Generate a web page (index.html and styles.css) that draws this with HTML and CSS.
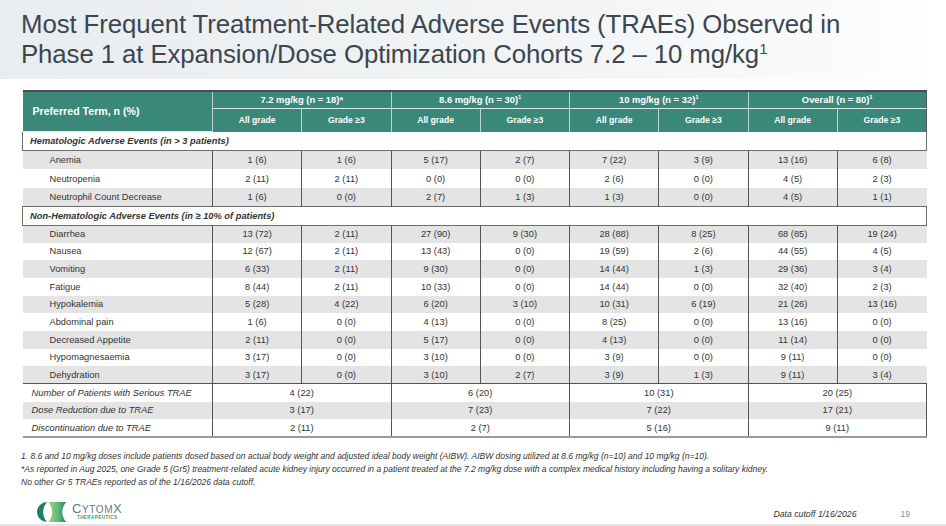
FILE: index.html
```html
<!DOCTYPE html>
<html lang="en">
<head>
<meta charset="utf-8">
<title>TRAEs</title>
<link rel="stylesheet" href="styles.css">
</head>
<body>
<div class="slide">
  <header class="title-band">
    <h1 class="title">Most Frequent Treatment-Related Adverse Events (TRAEs) Observed in<br>Phase 1 at Expansion/Dose Optimization Cohorts 7.2 – 10 mg/kg<sup>1</sup></h1>
  </header>

  <section class="table-wrap">
    <table class="ae">
      <colgroup>
        <col class="c-term">
        <col class="c-num"><col class="c-num"><col class="c-num"><col class="c-num">
        <col class="c-num"><col class="c-num"><col class="c-num"><col class="c-num">
      </colgroup>
      <thead>
        <tr class="h1">
          <th rowspan="2" class="h-term">Preferred Term, n (%)</th>
          <th colspan="2">7.2 mg/kg (n = 18)*</th>
          <th colspan="2">8.6 mg/kg (n = 30)<sup>1</sup></th>
          <th colspan="2">10 mg/kg (n = 32)<sup>1</sup></th>
          <th colspan="2" class="last">Overall (n = 80)<sup>1</sup></th>
        </tr>
        <tr class="h2">
          <th>All grade</th><th>Grade ≥3</th>
          <th>All grade</th><th>Grade ≥3</th>
          <th>All grade</th><th>Grade ≥3</th>
          <th>All grade</th><th class="last">Grade ≥3</th>
        </tr>
      </thead>
      <tbody>
        <tr class="sec"><td colspan="9">Hematologic Adverse Events (in &gt; 3 patients)</td></tr>
        <tr class="row g r-a"><td class="term">Anemia</td><td>1 (6)</td><td>1 (6)</td><td>5 (17)</td><td>2 (7)</td><td>7 (22)</td><td>3 (9)</td><td>13 (16)</td><td>6 (8)</td></tr>
        <tr class="row r-a"><td class="term">Neutropenia</td><td>2 (11)</td><td>2 (11)</td><td>0 (0)</td><td>0 (0)</td><td>2 (6)</td><td>0 (0)</td><td>4 (5)</td><td>2 (3)</td></tr>
        <tr class="row g r-b"><td class="term">Neutrophil Count Decrease</td><td>1 (6)</td><td>0 (0)</td><td>2 (7)</td><td>1 (3)</td><td>1 (3)</td><td>0 (0)</td><td>4 (5)</td><td>1 (1)</td></tr>
        <tr class="sec"><td colspan="9">Non-Hematologic Adverse Events (in ≥ 10% of patients)</td></tr>
        <tr class="row g"><td class="term">Diarrhea</td><td>13 (72)</td><td>2 (11)</td><td>27 (90)</td><td>9 (30)</td><td>28 (88)</td><td>8 (25)</td><td>68 (85)</td><td>19 (24)</td></tr>
        <tr class="row"><td class="term">Nausea</td><td>12 (67)</td><td>2 (11)</td><td>13 (43)</td><td>0 (0)</td><td>19 (59)</td><td>2 (6)</td><td>44 (55)</td><td>4 (5)</td></tr>
        <tr class="row g"><td class="term">Vomiting</td><td>6 (33)</td><td>2 (11)</td><td>9 (30)</td><td>0 (0)</td><td>14 (44)</td><td>1 (3)</td><td>29 (36)</td><td>3 (4)</td></tr>
        <tr class="row"><td class="term">Fatigue</td><td>8 (44)</td><td>2 (11)</td><td>10 (33)</td><td>0 (0)</td><td>14 (44)</td><td>0 (0)</td><td>32 (40)</td><td>2 (3)</td></tr>
        <tr class="row g"><td class="term">Hypokalemia</td><td>5 (28)</td><td>4 (22)</td><td>6 (20)</td><td>3 (10)</td><td>10 (31)</td><td>6 (19)</td><td>21 (26)</td><td>13 (16)</td></tr>
        <tr class="row"><td class="term">Abdominal pain</td><td>1 (6)</td><td>0 (0)</td><td>4 (13)</td><td>0 (0)</td><td>8 (25)</td><td>0 (0)</td><td>13 (16)</td><td>0 (0)</td></tr>
        <tr class="row g"><td class="term">Decreased Appetite</td><td>2 (11)</td><td>0 (0)</td><td>5 (17)</td><td>0 (0)</td><td>4 (13)</td><td>0 (0)</td><td>11 (14)</td><td>0 (0)</td></tr>
        <tr class="row"><td class="term">Hypomagnesaemia</td><td>3 (17)</td><td>0 (0)</td><td>3 (10)</td><td>0 (0)</td><td>3 (9)</td><td>0 (0)</td><td>9 (11)</td><td>0 (0)</td></tr>
        <tr class="row g"><td class="term">Dehydration</td><td>3 (17)</td><td>0 (0)</td><td>3 (10)</td><td>2 (7)</td><td>3 (9)</td><td>1 (3)</td><td>9 (11)</td><td>3 (4)</td></tr>
        <tr class="sum first"><td class="label">Number of Patients with Serious TRAE</td><td colspan="2">4 (22)</td><td colspan="2">6 (20)</td><td colspan="2">10 (31)</td><td colspan="2" class="last">20 (25)</td></tr>
        <tr class="sum g"><td class="label">Dose Reduction due to TRAE</td><td colspan="2">3 (17)</td><td colspan="2">7 (23)</td><td colspan="2">7 (22)</td><td colspan="2" class="last">17 (21)</td></tr>
        <tr class="sum end"><td class="label">Discontinuation due to TRAE</td><td colspan="2">2 (11)</td><td colspan="2">2 (7)</td><td colspan="2">5 (16)</td><td colspan="2" class="last">9 (11)</td></tr>
      </tbody>
    </table>
  </section>

  <section class="notes">
    <p>1. 8.6 and 10 mg/kg doses include patients dosed based on actual body weight and adjusted ideal body weight (AIBW). AIBW dosing utilized at 8.6 mg/kg (n=10) and 10 mg/kg (n=10).</p>
    <p>*As reported in Aug 2025, one Grade 5 (Gr5) treatment-related acute kidney injury occurred in a patient treated at the 7.2 mg/kg dose with a complex medical history including having a solitary kidney.</p>
    <p>No other Gr 5 TRAEs reported as of the 1/16/2026 data cutoff.</p>
  </section>

  <footer class="footer">
    <div class="logo">
      <svg class="logo-mark" viewBox="0 0 38 24" width="38" height="24" aria-hidden="true">
        <defs>
          <linearGradient id="xg" x1="0" y1="0" x2="1" y2="0">
            <stop offset="0" stop-color="#9ad48a"/>
            <stop offset="0.55" stop-color="#5fb97a"/>
            <stop offset="1" stop-color="#1f8466"/>
          </linearGradient>
        </defs>
        <path d="M14 2 A10 10 0 0 0 14 22 A15 15 0 0 1 14 2 Z" fill="#1f7d66"/>
        <path d="M15.5 2 Q23 12 15.5 22 L33 22 Q25.5 12 33 2 Z" fill="url(#xg)"/>
      </svg>
      <div class="brand">
        <span class="brand-name"><span class="cap">C</span>YTOM<span class="cap">X</span></span>
        <span class="brand-sub">THERAPEUTICS</span>
      </div>
    </div>
    <div class="cutoff">Data cutoff 1/16/2026</div>
    <div class="pnum">19</div>
  </footer>
</div>
</body>
</html>
```

FILE: styles.css
```css
html, body {
  margin: 0;
  padding: 0;
  background: #ffffff;
}

.slide {
  width: 946px;
  height: 526px;
  box-sizing: border-box;
  display: flex;
  flex-direction: column;
  font-family: "Liberation Sans", Arial, sans-serif;
  color: #333333;
  border-bottom: 2px solid #e3e4e6;
  overflow: hidden;
}

/* Title */
.title-band {
  height: 79px;
  box-sizing: border-box;
  padding: 9px 0 0 21px;
  background: linear-gradient(90deg, #eaedf0 0%, #f1f3f4 55%, #fbfbfc 90%, #ffffff 100%);
}

.title {
  margin: 0;
  font-size: 25.8px;
  line-height: 30px;
  font-weight: normal;
  color: #3b4650;
  letter-spacing: -0.1px;
}

.title sup {
  font-size: 15px;
  line-height: 0;
  vertical-align: 9px;
}

/* Table */
.table-wrap {
  margin: 11px 0 0 22px;
}

.ae {
  width: 904px;
  table-layout: fixed;
  border-collapse: collapse;
  border-top: 2px solid #4b4b4b;
  font-size: 9.3px;
  color: #333333;
}

.c-term { width: 190px; }
.c-num { width: 89.25px; }

.ae th,
.ae td {
  padding: 0;
  text-align: center;
  vertical-align: middle;
  white-space: nowrap;
}

.ae thead th {
  background: #3a887a;
  color: #ffffff;
  font-weight: bold;
  border-left: 1px solid #b9d7d0;
}

.ae thead th.last {
  border-right: 1px solid #5a5a5a;
}

.ae thead sup {
  font-size: 6px;
  line-height: 0;
  vertical-align: 4px;
}

.h1 { height: 17px; }
.h1 th { font-size: 9.4px; border-bottom: 1px solid #d9ebe6; }
.h2 { height: 23px; }
.h2 th { font-size: 8.6px; }

.ae thead th.h-term {
  border-left: none;
  text-align: left;
  padding-left: 10px;
  font-size: 10.6px;
}

/* Section rows */
.sec { height: 19px; }
.sec td {
  text-align: left;
  padding-left: 7px;
  font-weight: bold;
  font-style: italic;
  border: 1px solid #6e6e6e;
  background: #ffffff;
}

/* Data rows */
.row { height: 17.67px; }
.row.r-a { height: 19px; }
.row.r-b { height: 18px; }

.row td {
  border-left: 1px solid #555555;
}

.row td.term {
  border-left: none;
  text-align: left;
  padding-left: 27px;
}

.g td { background: #e4e4e4; }

/* Summary rows */
.sum { height: 17.67px; }
.sum td {
  font-style: normal;
  border-left: 1px solid #555555;
}
.sum td.label {
  border-left: none;
  text-align: left;
  padding-left: 9px;
  font-style: italic;
}
.sum td.last { border-right: 1px solid #555555; }
.sum.first td { border-top: 1px solid #555555; }
.sum.end td { border-bottom: 2px solid #9a9a9a; }

/* Footnotes */
.notes {
  margin: 12px 0 0 21px;
  font-family: "Liberation Sans", Arial, sans-serif;
  font-style: italic;
  font-size: 8.5px;
  line-height: 13px;
  color: #333333;
}

.notes p {
  margin: 0;
  white-space: nowrap;
}

/* Footer */
.footer {
  margin-top: auto;
  height: 25px;
  display: flex;
  align-items: center;
  padding: 0 36px 0 33px;
}

.logo {
  display: flex;
  align-items: center;
  gap: 1px;
}

.logo-mark {
  display: block;
}

.brand {
  display: flex;
  flex-direction: column;
  align-items: center;
  line-height: 1;
}

.brand-name {
  font-size: 10px;
  letter-spacing: 0.6px;
  color: #5c7f86;
}

.brand-name .cap {
  font-size: 13px;
}

.brand-sub {
  margin-top: 1px;
  font-size: 4.6px;
  font-weight: bold;
  letter-spacing: 0.4px;
  color: #3c9a70;
}

.cutoff {
  margin-left: auto;
  font-style: italic;
  font-size: 8.7px;
  color: #333333;
  padding-top: 4px;
}

.pnum {
  margin-left: 44px;
  font-size: 8.5px;
  color: #8a8a8a;
  padding-top: 4px;
}
```
